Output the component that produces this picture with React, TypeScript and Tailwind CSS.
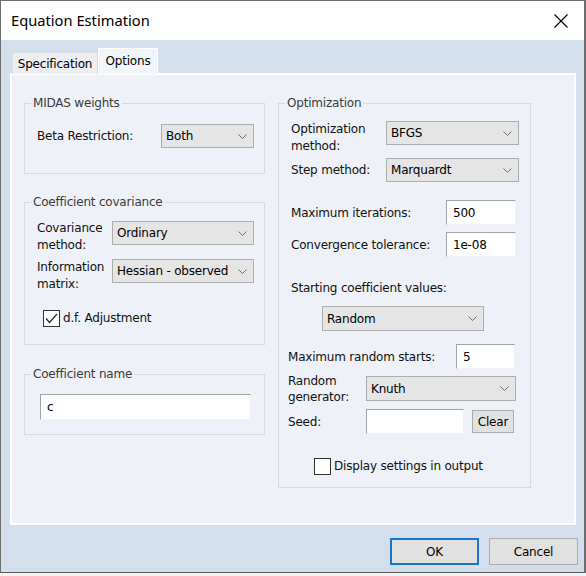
import React from "react";

function Chevron() {
  return (
    <svg width="9" height="5" viewBox="0 0 9 5" className="shrink-0">
      <path d="M0.5 0.5 L4.5 4.5 L8.5 0.5" fill="none" stroke="#6e6e6e" strokeWidth="1" />
    </svg>
  );
}

function Combo({ value, className }: { value: string; className: string }) {
  return (
    <div
      className={`flex items-center justify-between bg-[#e5e5e5] border border-[#adadad] pl-[4px] pr-[6px] text-black ${className}`}
    >
      <span className="whitespace-nowrap">{value}</span>
      <Chevron />
    </div>
  );
}

function TextBox({ value, className }: { value: string; className: string }) {
  return (
    <div
      className={`flex items-center bg-white border-t border-l border-[#a3a3a3] border-r border-b border-r-[#f2f2f2] border-b-[#f2f2f2] pl-[6px] text-black ${className}`}
    >
      {value}
    </div>
  );
}

function CheckBox({ checked }: { checked: boolean }) {
  return (
    <div className="w-[17px] h-[17px] bg-white border border-[#333333] flex items-center justify-center shrink-0">
      {checked && (
        <svg width="13" height="11" viewBox="0 0 13 11">
          <path d="M1 5.5 L4.5 9.5 L12 1" fill="none" stroke="#2b2b2b" strokeWidth="1.2" />
        </svg>
      )}
    </div>
  );
}

function Group({
  title,
  className,
  children,
}: {
  title: string;
  className: string;
  children: React.ReactNode;
}) {
  return (
    <fieldset className={`border border-[#d6dae2] ${className}`}>
      <legend className="ml-[6px] px-[2px] leading-[14px] text-[#3a3a3a]">{title}</legend>
      {children}
    </fieldset>
  );
}

export default function App() {
  return (
    <div className="w-[586px] h-[576px] bg-[#f4f4f4] font-['DejaVu_Sans',sans-serif] text-[12px] tracking-[-0.2px] text-[#111111] overflow-hidden">
      <div className="w-[586px] h-[573px] border border-[#6e6e6e] border-r-[2px] border-b-[#5a5a5a] flex flex-col">
        {/* Title bar */}
        <div className="h-[39px] bg-white flex items-center justify-between pl-[10px] pr-[16px] shrink-0">
          <span className="font-['Noto_Sans',sans-serif] text-[14.7px] tracking-normal text-black">
            Equation Estimation
          </span>
          <svg width="14" height="14" viewBox="0 0 14 14">
            <path d="M0.5 0.5 L13.5 13.5 M13.5 0.5 L0.5 13.5" stroke="#000" strokeWidth="1.1" />
          </svg>
        </div>

        {/* Body */}
        <div className="flex-1 bg-[#d4dfee] flex flex-col pt-[8px] pl-[9px]">
          {/* Tabs */}
          <div className="flex items-end ml-[2px] h-[26px] relative z-10 mb-[-1px]">
            <div className="h-[22px] w-[86px] bg-[#eceef2] border border-[#d9dde4] border-b-0 flex items-center justify-center text-black">
              Specification
            </div>
            <div className="h-[26px] w-[60px] bg-[#f1f4f9] border border-white border-b-0 flex items-center justify-center text-black pb-[1px]">
              Options
            </div>
          </div>

          {/* Panel */}
          <div className="w-[566px] h-[452px] bg-[#eef2f8] border-2 border-white flex pl-[12px] pt-[21px] gap-[13px]">
            {/* Left column */}
            <div className="w-[241px] flex flex-col">
              <Group title="MIDAS weights" className="w-[241px]">
                <div className="flex items-center pl-[12px] pt-[14px] pb-[25px]">
                  <span className="w-[124px]">Beta Restriction:</span>
                  <Combo value="Both" className="w-[93px] h-[24px]" />
                </div>
              </Group>

              <Group title="Coefficient covariance" className="w-[241px] mt-[21px]">
                <div className="flex flex-col pl-[12px] pt-[12px] pb-[17px]">
                  <div className="flex items-start h-[24px]">
                    <span className="w-[75px] leading-[17px] mt-[-1px]">
                      Covariance
                      <br />
                      method:
                    </span>
                    <Combo value="Ordinary" className="w-[142px] h-[24px]" />
                  </div>
                  <div className="flex items-start h-[24px] mt-[14px]">
                    <span className="w-[75px] leading-[17px] mt-[0px]">
                      Information
                      <br />
                      matrix:
                    </span>
                    <Combo value="Hessian - observed" className="w-[142px] h-[24px]" />
                  </div>
                  <div className="flex items-center mt-[26px] ml-[6px] gap-[3px]">
                    <CheckBox checked />
                    <span>d.f. Adjustment</span>
                  </div>
                </div>
              </Group>

              <Group title="Coefficient name" className="w-[241px] mt-[22px]">
                <div className="pl-[15px] pt-[13px] pb-[14px]">
                  <TextBox value="c" className="w-[211px] h-[26px]" />
                </div>
              </Group>
            </div>

            {/* Right column */}
            <div className="w-[253px] flex flex-col">
              <Group title="Optimization" className="w-[253px]">
                <div className="flex flex-col pl-[12px] pt-[11px] pb-[12px]">
                  <div className="flex items-start h-[24px]">
                    <span className="w-[95px] leading-[17px]">
                      Optimization
                      <br />
                      method:
                    </span>
                    <Combo value="BFGS" className="w-[133px] h-[24px]" />
                  </div>
                  <div className="flex items-center mt-[13px]">
                    <span className="w-[95px]">Step method:</span>
                    <Combo value="Marquardt" className="w-[133px] h-[24px]" />
                  </div>
                  <div className="flex items-center mt-[18px]">
                    <span className="w-[155px]">Maximum iterations:</span>
                    <TextBox value="500" className="w-[70px] h-[25px]" />
                  </div>
                  <div className="flex items-center mt-[7px]">
                    <span className="w-[155px]">Convergence tolerance:</span>
                    <TextBox value="1e-08" className="w-[70px] h-[25px]" />
                  </div>
                  <div className="mt-[23px] leading-[16px]">Starting coefficient values:</div>
                  <div className="mt-[10px] ml-[31px]">
                    <Combo value="Random" className="w-[162px] h-[25px]" />
                  </div>
                  <div className="flex items-center mt-[13px] ml-[-3px]">
                    <span className="w-[168px]">Maximum random starts:</span>
                    <TextBox value="5" className="w-[59px] h-[25px]" />
                  </div>
                  <div className="flex items-start h-[25px] mt-[7px] ml-[-3px]">
                    <span className="w-[78px] leading-[16px] mt-[-3px]">
                      Random
                      <br />
                      generator:
                    </span>
                    <Combo value="Knuth" className="w-[150px] h-[25px]" />
                  </div>
                  <div className="flex items-center mt-[8px] ml-[-3px]">
                    <span className="w-[78px]">Seed:</span>
                    <TextBox value="" className="w-[98px] h-[25px]" />
                    <div className="ml-[8px] w-[42px] h-[23px] bg-[#e1e1e1] border border-[#adadad] flex items-center justify-center text-black">
                      Clear
                    </div>
                  </div>
                  <div className="flex items-center mt-[23px] ml-[23px] gap-[3px]">
                    <CheckBox checked={false} />
                    <span>Display settings in output</span>
                  </div>
                </div>
              </Group>
            </div>
          </div>

          {/* Buttons */}
          <div className="flex justify-end gap-[10px] mt-[13px] pr-[6px]">
            <div className="w-[89px] h-[27px] bg-[#e1e1e1] border-2 border-[#1874cd] flex items-center justify-center text-black">
              OK
            </div>
            <div className="w-[89px] h-[27px] bg-[#e1e1e1] border border-[#adadad] flex items-center justify-center text-black">
              Cancel
            </div>
          </div>
        </div>
      </div>
    </div>
  );
}
